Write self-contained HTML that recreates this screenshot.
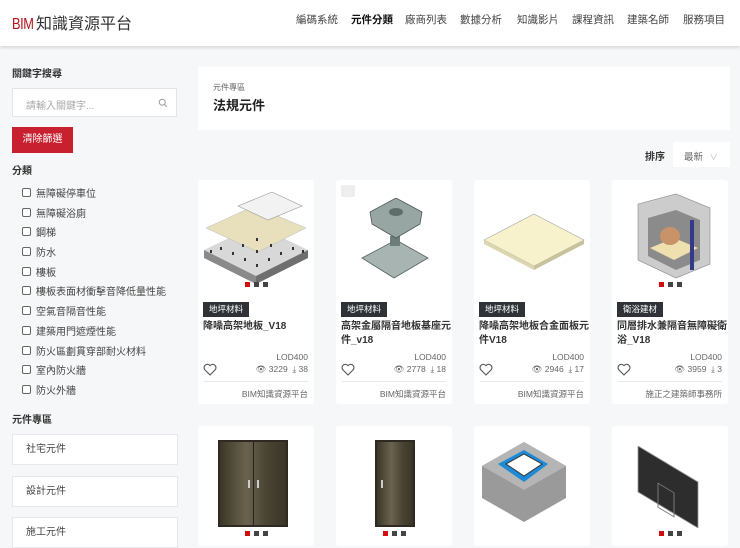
<!DOCTYPE html>
<html><head><meta charset="utf-8">
<style>
*{box-sizing:border-box;margin:0;padding:0}
body{width:740px;height:540px;overflow:hidden;background:#f6f7f9;font-family:"Liberation Sans","Noto Sans CJK TC",sans-serif;color:#333;position:relative}
.abs{position:absolute}
header{position:absolute;left:0;top:0;width:740px;height:46px;background:#fff;box-shadow:0 2px 3px rgba(0,0,0,.12)}
.logo{left:12px;top:10px;font-size:16px;color:#333;white-space:nowrap}
.logo b{color:#b4111e;font-weight:normal;display:inline-block;transform:scaleX(.8);transform-origin:left;margin-right:-3px;letter-spacing:-.5px}
.nav{top:12px;font-size:10.5px;color:#444;white-space:nowrap}
.nav.on{color:#111;font-weight:bold}
.h{font-size:10px;font-weight:bold;color:#333}
.search{left:12px;top:88px;width:165px;height:29px;background:#fff;border:1px solid #e3e5e8}
.btn{left:12px;top:127px;width:61px;height:26px;background:#c8202f;color:#fff;font-size:10px;line-height:26px;text-align:center}
.cb{left:22px;font-size:10px;color:#444;white-space:nowrap;display:flex;align-items:center}
.cb i{display:inline-block;width:9px;height:9px;border:1px solid #666;border-radius:2px;margin-right:5px;background:#fff}
.zone{left:12px;width:166px;height:31px;background:#fff;border:1px solid #e6e8eb;font-size:10px;color:#444;padding-left:13px;line-height:29px}
.card{width:116px;background:#fff;border-radius:3px}
.tag{position:absolute;left:5px;top:122px;background:#2f3338;color:#fff;font-size:8.5px;padding:0 6px;height:15px;line-height:15px}
.title{position:absolute;left:5px;top:140px;width:112px;font-size:10px;font-weight:bold;color:#333;line-height:14px}
.lod{position:absolute;right:6px;top:172px;font-size:8.5px;color:#666}
.stat{position:absolute;right:6px;top:184px;font-size:8.5px;color:#666;white-space:nowrap}
.heart{position:absolute;left:5px;top:183px}
.line{position:absolute;left:6px;right:6px;top:201px;border-top:1px solid #e8e8e8}
.src{position:absolute;right:6px;top:208px;font-size:8.5px;color:#666;white-space:nowrap}
.dots{position:absolute;display:flex;gap:4px}
.dots span{width:5px;height:5px;background:#444}
.dots span:first-child{background:#d10d0d}
.door{background:linear-gradient(90deg,#3b3628,#6a634e 40%,#4a4434 70%,#3a3528);border:2px solid #2e2a22}
</style></head><body>
<header>
<div class="abs logo"><b>BIM</b>知識資源平台</div>
<div class="abs nav" style="left:296px">編碼系統</div>
<div class="abs nav on" style="left:351px">元件分類</div>
<div class="abs nav" style="left:405px">廠商列表</div>
<div class="abs nav" style="left:460px">數據分析</div>
<div class="abs nav" style="left:517px">知識影片</div>
<div class="abs nav" style="left:572px">課程資訊</div>
<div class="abs nav" style="left:627px">建築名師</div>
<div class="abs nav" style="left:683px">服務項目</div>
</header>

<div class="abs h" style="left:12px;top:65px">關鍵字搜尋</div>
<div class="abs search"><span class="abs" style="left:13px;top:8px;font-size:10px;color:#aaa">請輸入關鍵字...</span>
<svg class="abs" style="left:145px;top:9px" width="10" height="10" viewBox="0 0 10 10"><circle cx="4.2" cy="4.2" r="3" fill="none" stroke="#999" stroke-width="1"/><line x1="6.5" y1="6.5" x2="8.8" y2="8.8" stroke="#999"/></svg></div>
<div class="abs btn">清除篩選</div>
<div class="abs h" style="left:12px;top:162px">分類</div>
<div class="abs cb" style="top:185px"><i></i>無障礙停車位</div>
<div class="abs cb" style="top:205px"><i></i>無障礙浴廁</div>
<div class="abs cb" style="top:224px"><i></i>鋼梯</div>
<div class="abs cb" style="top:244px"><i></i>防水</div>
<div class="abs cb" style="top:264px"><i></i>樓板</div>
<div class="abs cb" style="top:283px"><i></i>樓板表面材衝擊音降低量性能</div>
<div class="abs cb" style="top:303px"><i></i>空氣音隔音性能</div>
<div class="abs cb" style="top:323px"><i></i>建築用門遮煙性能</div>
<div class="abs cb" style="top:343px"><i></i>防火區劃貫穿部耐火材料</div>
<div class="abs cb" style="top:362px"><i></i>室內防火牆</div>
<div class="abs cb" style="top:382px"><i></i>防火外牆</div>
<div class="abs h" style="left:12px;top:411px">元件專區</div>
<div class="abs zone" style="top:434px">社宅元件</div>
<div class="abs zone" style="top:476px">設計元件</div>
<div class="abs zone" style="top:517px">施工元件</div>

<div class="abs" style="left:198px;top:67px;width:532px;height:63px;background:#fff">
<div class="abs" style="left:15px;top:15px;font-size:8px;color:#666">元件專區</div>
<div class="abs" style="left:15px;top:28px;font-size:13px;font-weight:bold;color:#222">法規元件</div>
</div>
<div class="abs" style="left:645px;top:148px;font-size:10px;font-weight:bold;color:#333">排序</div>
<div class="abs" style="left:673px;top:142px;width:57px;height:25px;background:#fff;font-size:9.5px;color:#666;padding:7px 0 0 11px">最新 <span style="color:#bbb;font-size:8px;margin-left:4px">∨</span></div>

<div class="abs card" style="left:198px;top:180px;height:224px">
<svg class="abs" style="left:4px;top:12px" width="108" height="95" viewBox="0 0 108 95">
<polygon points="2,58 54,33 106,58 54,84" fill="#d8d8d8"/><polygon points="2,58 54,84 54,92 2,66" fill="#8a8a8a"/><polygon points="54,84 106,58 106,66 54,92" fill="#6f6f6f"/>
<polygon points="4,36 52,14 104,36 56,60" fill="#e8e0bc" stroke="#bbb" stroke-width=".5"/>
<polygon points="36,14 70,0 100,14 66,28" fill="#f2f2f2" stroke="#999" stroke-width=".6"/>
<g fill="#333"><rect x="18" y="55" width="2" height="3"/><rect x="30" y="60" width="2" height="3"/><rect x="42" y="66" width="2" height="3"/><rect x="54" y="72" width="2" height="3"/><rect x="66" y="66" width="2" height="3"/><rect x="78" y="60" width="2" height="3"/><rect x="90" y="55" width="2" height="3"/><rect x="40" y="52" width="2" height="3"/><rect x="54" y="58" width="2" height="3"/><rect x="68" y="52" width="2" height="3"/><rect x="54" y="46" width="2" height="3"/><rect x="8" y="58" width="2" height="3"/><rect x="100" y="58" width="2" height="3"/></g>
</svg>
<div class="dots" style="left:47px;top:102px"><span></span><span></span><span></span></div>
<div class="tag">地坪材料</div><div class="title">降噪高架地板_V18</div>
<div class="lod">LOD400</div><div class="stat">👁 3229 &nbsp;⤓ 38</div>
<svg class="heart" width="14" height="13" viewBox="0 0 14 13"><path d="M7 12 L1.8 6.8 A3 3 0 0 1 7 2.6 A3 3 0 0 1 12.2 6.8 Z" fill="none" stroke="#555" stroke-width="1.1"/></svg>
<div class="line"></div><div class="src">BIM知識資源平台</div>
</div>

<div class="abs card" style="left:336px;top:180px;height:224px">
<div class="abs" style="left:5px;top:5px;width:14px;height:12px;background:#eee;border-radius:2px"></div>
<svg class="abs" style="left:24px;top:18px" width="70" height="92" viewBox="0 0 70 92">
<polygon points="2,60 36,42 68,60 34,80" fill="#a7b4b2" stroke="#56625f" stroke-width=".8"/>
<rect x="30" y="38" width="10" height="10" fill="#6f7d7a"/>
<polygon points="10,14 36,0 62,14 60,26 36,40 12,26" fill="#97a6a3" stroke="#4d5a57" stroke-width=".8"/>
<ellipse cx="36" cy="14" rx="7" ry="4" fill="#5f6d6a"/>
</svg>
<div class="tag">地坪材料</div><div class="title">高架金屬隔音地板基座元件_v18</div>
<div class="lod">LOD400</div><div class="stat">👁 2778 &nbsp;⤓ 18</div>
<svg class="heart" width="14" height="13" viewBox="0 0 14 13"><path d="M7 12 L1.8 6.8 A3 3 0 0 1 7 2.6 A3 3 0 0 1 12.2 6.8 Z" fill="none" stroke="#555" stroke-width="1.1"/></svg>
<div class="line"></div><div class="src">BIM知識資源平台</div>
</div>

<div class="abs card" style="left:474px;top:180px;height:224px">
<svg class="abs" style="left:8px;top:28px" width="104" height="66" viewBox="0 0 104 66">
<polygon points="2,32 52,6 102,32 52,58" fill="#f7f2cc" stroke="#aaa" stroke-width=".7"/>
<polygon points="2,32 52,58 52,62 2,36" fill="#ddd7b0"/><polygon points="52,58 102,32 102,36 52,62" fill="#c9c39d"/>
</svg>
<div class="tag">地坪材料</div><div class="title">降噪高架地板合金面板元件V18</div>
<div class="lod">LOD400</div><div class="stat">👁 2946 &nbsp;⤓ 17</div>
<svg class="heart" width="14" height="13" viewBox="0 0 14 13"><path d="M7 12 L1.8 6.8 A3 3 0 0 1 7 2.6 A3 3 0 0 1 12.2 6.8 Z" fill="none" stroke="#555" stroke-width="1.1"/></svg>
<div class="line"></div><div class="src">BIM知識資源平台</div>
</div>

<div class="abs card" style="left:612px;top:180px;height:224px">
<svg class="abs" style="left:24px;top:10px" width="76" height="92" viewBox="0 0 76 92">
<polygon points="2,14 40,4 74,18 74,74 40,88 2,70" fill="#ccc" stroke="#888" stroke-width=".6"/>
<polygon points="12,28 40,20 64,30 64,70 40,80 12,66" fill="#8b8b8b"/>
<polygon points="14,58 38,48 62,58 38,70" fill="#efe0b0"/>
<ellipse cx="34" cy="46" rx="10" ry="9" fill="#c9936a"/>
<rect x="54" y="30" width="4" height="50" fill="#333a88"/>
</svg>
<div class="dots" style="left:47px;top:102px"><span></span><span></span><span></span></div>
<div class="tag">衛浴建材</div><div class="title">同層排水兼隔音無障礙衛浴_V18</div>
<div class="lod">LOD400</div><div class="stat">👁 3959 &nbsp;⤓ 3</div>
<svg class="heart" width="14" height="13" viewBox="0 0 14 13"><path d="M7 12 L1.8 6.8 A3 3 0 0 1 7 2.6 A3 3 0 0 1 12.2 6.8 Z" fill="none" stroke="#555" stroke-width="1.1"/></svg>
<div class="line"></div><div class="src">施正之建築師事務所</div>
</div>

<div class="abs card" style="left:198px;top:426px;height:120px">
<div class="abs door" style="left:20px;top:14px;width:70px;height:87px"></div>
<div class="abs" style="left:55px;top:16px;width:1px;height:83px;background:#222"></div>
<div class="abs" style="left:50px;top:54px;width:2px;height:8px;background:#ccc"></div>
<div class="abs" style="left:59px;top:54px;width:2px;height:8px;background:#ccc"></div>
<div class="dots" style="left:47px;top:105px"><span></span><span></span><span></span></div>
</div>
<div class="abs card" style="left:336px;top:426px;height:120px">
<div class="abs door" style="left:39px;top:14px;width:40px;height:87px"></div>
<div class="abs" style="left:45px;top:54px;width:2px;height:8px;background:#ccc"></div>
<div class="dots" style="left:47px;top:105px"><span></span><span></span><span></span></div>
</div>
<div class="abs card" style="left:474px;top:426px;height:120px">
<svg class="abs" style="left:6px;top:16px" width="86" height="82" viewBox="0 0 86 82">
<polygon points="2,24 44,0 86,24 86,56 44,80 2,56" fill="#9a9a9a"/>
<polygon points="2,24 44,48 86,24 44,0" fill="#b5b5b5"/>
<polygon points="18,22 44,8 68,22 44,40" fill="#1e8ad6"/>
<polygon points="26,22 44,12 62,22 44,34" fill="#fff" stroke="#333"/>
</svg>
</div>
<div class="abs card" style="left:612px;top:426px;height:120px">
<svg class="abs" style="left:24px;top:20px" width="64" height="82" viewBox="0 0 64 82">
<polygon points="2,0 62,36 62,82 2,46" fill="#2d2d2d" stroke="#999" stroke-width=".8"/>
<rect x="22" y="38" width="16" height="24" fill="none" stroke="#777" transform="skewY(31) translate(0,-14)"/>
</svg>
<div class="dots" style="left:47px;top:105px"><span></span><span></span><span></span></div>
</div>
</body></html>
